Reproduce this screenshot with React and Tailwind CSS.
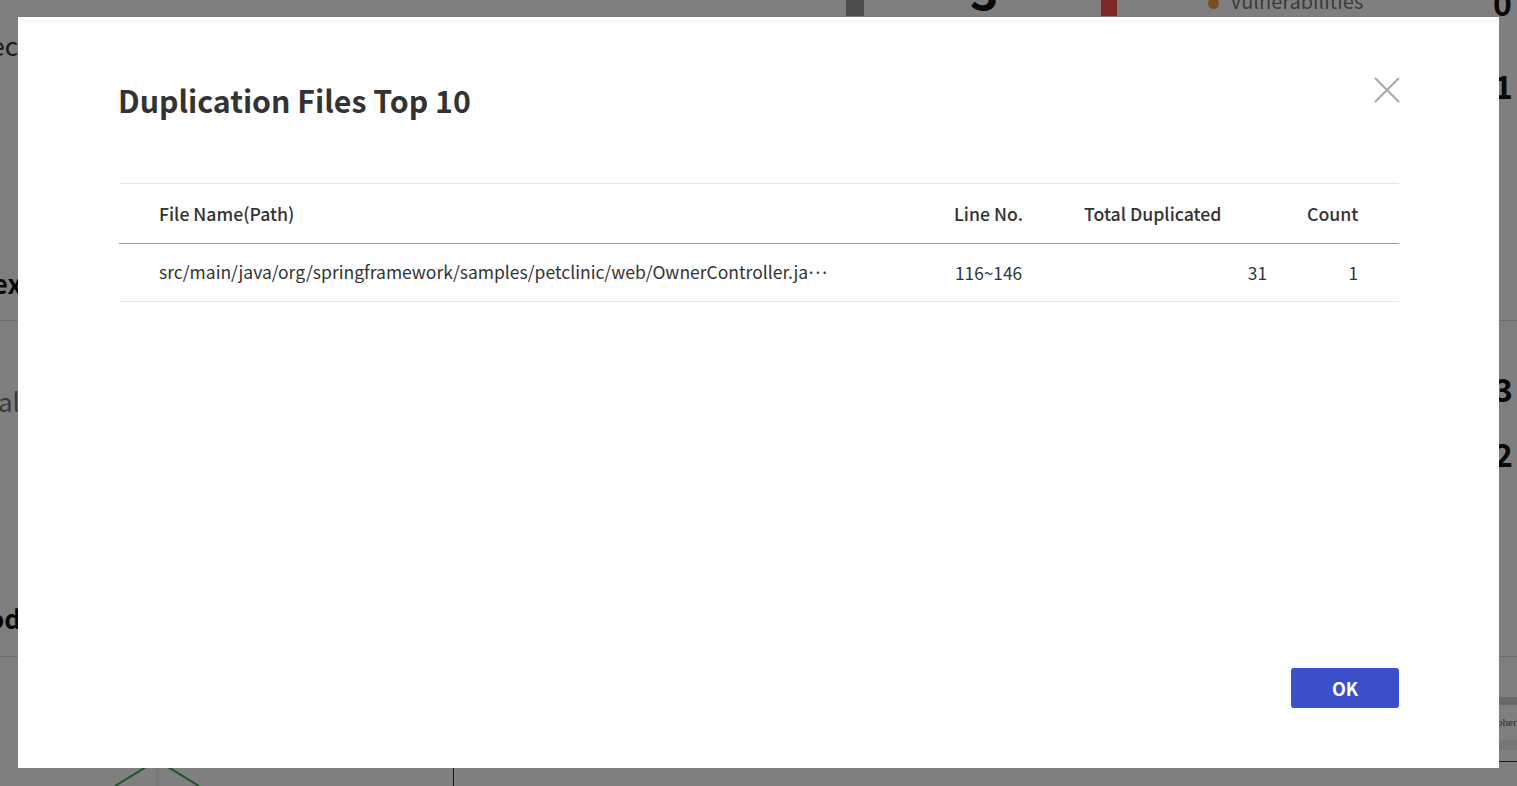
const font = { fontFamily: '"Noto Sans CJK KR", "Noto Sans", sans-serif' };

// dashboard behind the dialog, only its edges peek out
const Backdrop = () => (
  <div className="absolute inset-0 flex overflow-hidden bg-white text-[#111]">
    {/* columna izquierda */}
    <div className="w-[18px] shrink-0 flex flex-col items-end overflow-hidden">
      <span className="mt-[28px] text-[26px] leading-[34px] text-[#333] whitespace-nowrap">Spec</span>
      <span className="mt-[204px] text-[26px] leading-[34px] font-bold whitespace-nowrap mr-[-4px]">Index</span>
      <div className="mt-[20px] self-stretch h-px bg-[#ddd]" />
      <span className="mt-[63px] text-[26px] leading-[34px] text-[#777] whitespace-nowrap mr-[-2px]">Total</span>
      <span className="mt-[183px] text-[26px] leading-[34px] font-bold whitespace-nowrap mr-[-3px]">Method</span>
      <div className="mt-[21px] self-stretch h-px bg-[#ddd]" />
    </div>

    {/* centro */}
    <div className="flex-1 flex flex-col">
      <div className="h-[17px] flex items-start">
        <div className="ml-[828px] w-[18px] h-[16px] bg-[#9a9a9a]" />
        <span className="ml-[106px] mt-[-38px] text-[48px] font-bold leading-[54px]">3</span>
        <div className="ml-[103px] w-[16px] h-[16px] bg-[#ff5252]" />
        <div className="ml-[91px] mt-[-2px] w-[11px] h-[11px] rounded-full bg-[#f0a040]" />
        <span className="ml-[11px] mt-[-13px] text-[20px] leading-[28px] text-[#777] whitespace-nowrap">Vulnerabilities</span>
      </div>
      <div className="mt-auto h-[18px] flex">
        <svg className="ml-[82px]" width="120" height="18" viewBox="0 0 120 18">
          <path d="M57 0 V18" stroke="#ddd" strokeWidth="1" fill="none" />
          <path d="M15 18 L 46 -1 M 68 -1 L 99 18" stroke="#3aa84a" strokeWidth="2" fill="none" />
        </svg>
        <div className="ml-[233px] w-px h-full bg-[#1a2a8a]" />
      </div>
    </div>

    {/* columna derecha */}
    <div className="w-[25px] shrink-0 flex flex-col overflow-hidden">
      <span className="mt-[-18px] ml-[1px] text-[32px] font-bold leading-[40px]">0</span>
      <span className="mt-[43px] ml-[2px] text-[32px] font-bold leading-[40px]">1</span>
      <div className="mt-[215px] ml-[7px] h-px bg-[#ddd]" />
      <span className="mt-[47px] ml-[2px] text-[32px] font-bold leading-[40px]">3</span>
      <span className="mt-[25px] ml-[2px] text-[32px] font-bold leading-[40px]">2</span>
      <div className="mt-[183px] ml-[7px] h-px bg-[#ddd]" />
      <div className="mt-[40px] ml-[7px] h-[8px] bg-[#d0d0d0]" />
      <span className="mt-[9px] ml-[5px] text-[11px] leading-[16px] text-[#555]" style={{ fontFamily: '"Liberation Serif", serif' }}>pher</span>
      <div className="mt-[10px] ml-[7px] h-[10px] bg-[#eee]" />
      <div className="mt-[11px] ml-[7px] h-px bg-[#1a2a8a]" />
    </div>
  </div>
);

const App = () => {
  return (
    <div className="relative w-full h-[786px] overflow-hidden" style={font}>
      <Backdrop />
      <div className="absolute inset-0 bg-black/50" />

      <div className="absolute left-[18px] top-[17px] w-[1481px] h-[751px] bg-white flex flex-col pl-[101px] pr-[100px] pt-[61px] pb-[60px]">
        {/* cabecera */}
        <div className="flex items-start justify-between">
          <h2 className="text-[30.3px] leading-[45px] font-bold text-[#333] ml-[-1px]">Duplication Files Top 10</h2>
          <button className="mt-[-1px] mr-[-1px] cursor-pointer">
            <svg width="26" height="26" viewBox="0 0 26 26">
              <path d="M1 1 L25 25 M25 1 L1 25" stroke="#a8a8a8" strokeWidth="2" fill="none" />
            </svg>
          </button>
        </div>

        {/* tabla */}
        <div className="mt-[60px] border-t border-[#e6e6e6] text-[#333]">
          <div className="grid grid-cols-[795px_130px_263px_92px] h-[60px] items-center border-b border-[#9a9a9a] text-[17.7px] font-medium">
            <div className="pl-[40px]">File Name(Path)</div>
            <div className="pl-[40px]">Line No.</div>
            <div className="pl-[40px]">Total Duplicated</div>
            <div className="pr-[41px] text-right">Count</div>
          </div>
          <div className="grid grid-cols-[795px_130px_263px_92px] h-[58px] items-center border-b border-[#e6e6e6] text-[17.3px]">
            <div className="pl-[40px] whitespace-nowrap overflow-hidden text-[17.5px]">
              src/main/java/org/springframework/samples/petclinic/web/OwnerController.ja<span className="ml-[-2px] tracking-[-3px]">···</span>
            </div>
            <div className="pl-[41px]">116~146</div>
            <div className="pr-[40px] text-right">31</div>
            <div className="pr-[41px] text-right">1</div>
          </div>
        </div>

        <div className="mt-auto flex justify-end">
          <button className="w-[108px] h-[40px] rounded-[3px] bg-[#3a4fc8] text-white text-[18px] font-semibold cursor-pointer">
            OK
          </button>
        </div>
      </div>
    </div>
  );
};

export default App;
